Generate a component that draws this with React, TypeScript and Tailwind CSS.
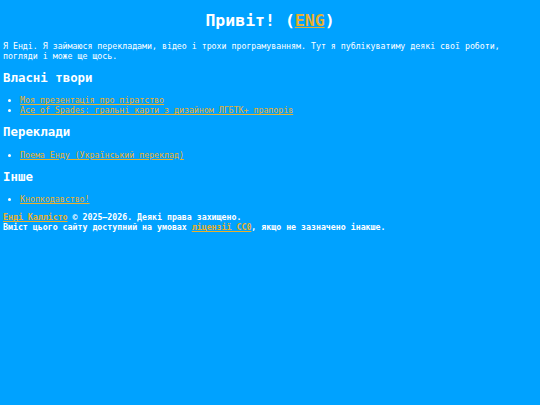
const links = {
  own: [
    'Моя презентація про піратство',
    'Ace of Spades: гральні карти з дизайном ЛГБТК+ прапорів',
  ],
  translations: ['Поема Енду (Український переклад)'],
  other: ['Кнопкодавство!'],
};

const linkCls = 'text-[#e8b02c] underline underline-offset-1';

const Section = ({ title, items }: { title: string; items: string[] }) => (
  <>
    <h2 className="my-[10px] text-[12.4px] leading-[14.3px] font-bold">{title}</h2>
    <ul className="my-[8px] list-disc pl-[17px]">
      {items.map(item => (
        <li key={item} className="leading-[10px]">
          <a href="#" className={linkCls}>{item}</a>
        </li>
      ))}
    </ul>
  </>
);

const App = () => {
  return (
    <div className="min-h-screen w-full bg-[#00a2ff] text-white font-['DejaVu_Sans_Mono',monospace] text-[8.25px] leading-[10px] px-[3px] pt-[11px] pb-4 flow-root">
      <h1 className="mb-[11px] text-center text-[16.5px] leading-[19px] font-bold">
        Привіт! (<a href="#" className={linkCls}>ENG</a>)
      </h1>
      <div className="w-[526px]">
        <p className="my-[8px]">
          Я Енді. Я займаюся перекладами, відео і трохи програмуванням. Тут я публікуватиму деякі свої роботи, погляди і може ще щось.
        </p>
        <Section title="Власні твори" items={links.own} />
        <Section title="Переклади" items={links.translations} />
        <Section title="Інше" items={links.other} />
        <footer className="mt-[8px] font-bold">
          <p>
            <a href="#" className={linkCls}>Енді Каллісто</a> © 2025–2026. Деякі права захищено.
          </p>
          <p>
            Вміст цього сайту доступний на умовах <a href="#" className={linkCls}>ліцензії CC0</a>, якщо не зазначено інакше.
          </p>
        </footer>
      </div>
    </div>
  );
};

export default App;
